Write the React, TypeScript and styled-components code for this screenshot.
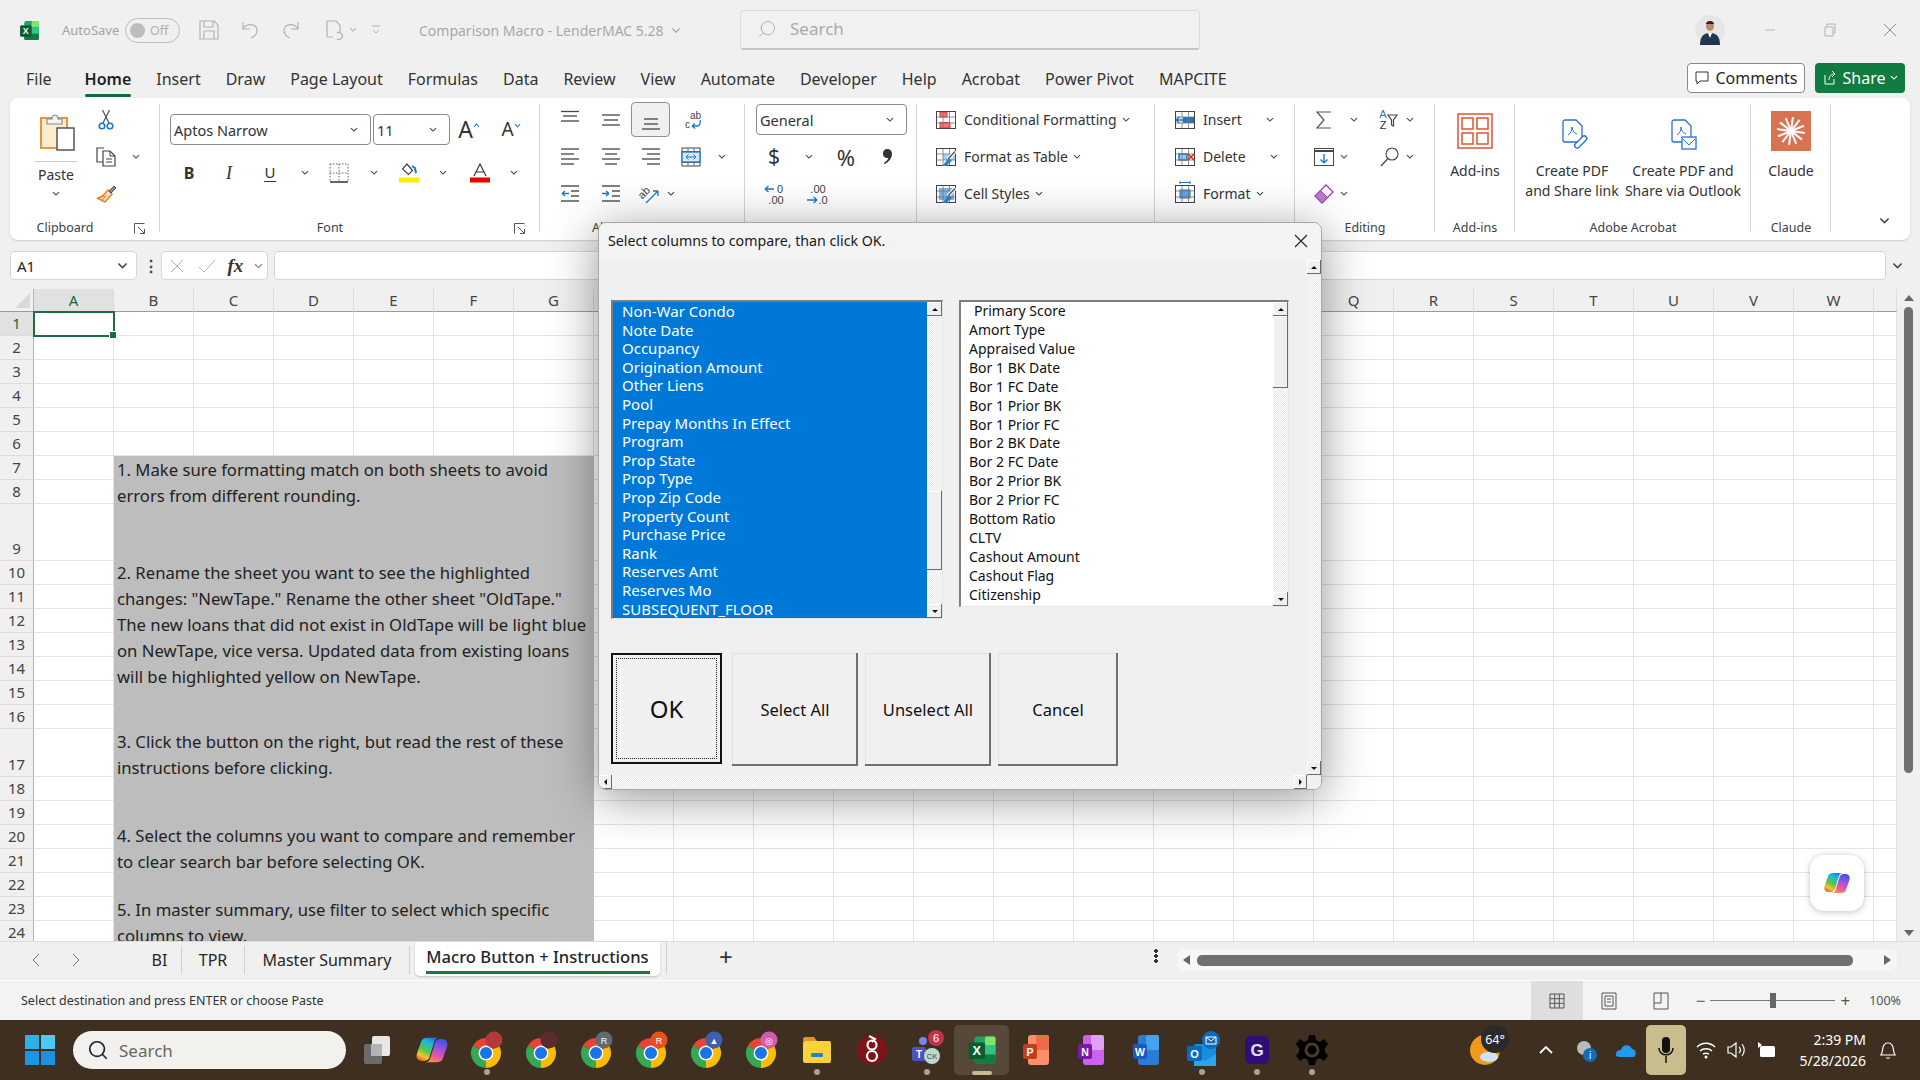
import { ReactNode } from 'react'
import styled, { createGlobalStyle } from 'styled-components'
import { Search as SearchIcon } from 'lucide-react'

const UI = `"Noto Sans", "Open Sans", sans-serif`

const Global = createGlobalStyle`
  html, body { margin: 0; padding: 0; background: #f0f0f0; }
  * { box-sizing: border-box; }
  body { font-family: ${UI}; color: #262626; }
`

const Screen = styled.div`
  position: relative;
  width: 1920px;
  height: 1080px;
  overflow: hidden;
  display: flex;
  flex-direction: column;
  background: #f0f0f0;
`

/* ---------- small drawing helpers ---------- */

const Svg = ({ w = 20, h = 20, vb, children }: { w?: number; h?: number; vb?: string; children: ReactNode }) => (
  <svg width={w} height={h} viewBox={vb ?? `0 0 ${w} ${h}`} fill="none" style={{ overflow: 'visible', flex: 'none' }}>
    {children}
  </svg>
)

const Chev = ({ color = '#444', w = 8 }: { color?: string; w?: number }) => (
  <svg width={w} height={w * 0.65} viewBox="0 0 8 5" fill="none" style={{ flex: 'none' }}>
    <path d="M1 1l3 3 3-3" stroke={color} strokeWidth="1.100" />
  </svg>
)

const Lines = ({ rows }: { rows: [number, number, number][] }) => (
  <Svg>
    {rows.map(([x1, x2, y]) => (
      <path key={y} d={`M${x1} ${y}H${x2}`} stroke="#444" strokeWidth="1.300" />
    ))}
  </Svg>
)

const GridIco = ({ children, over }: { children?: ReactNode; over?: ReactNode }) => (
  <Svg w={20} h={18}>
    <rect x=".5" y=".5" width="19" height="17" fill="#fff" />
    {children}
    <path d="M.5 6h19M.5 12h19M7 .5v17M13.500 .5v17" stroke="#777" strokeWidth=".8" />
    <rect x=".5" y=".5" width="19" height="17" stroke="#444" />
    {over}
  </Svg>
)

const Brush = () => (
  <>
    <path d="M19.500 3L12 11" stroke="#fff" strokeWidth="4" />
    <path d="M19 3.500L12 11" stroke="#555" strokeWidth="1.400" />
    <path d="M13 10l3 3-6 5H6c2-2 4-5 7-8z" fill="#2f7fd1" />
  </>
)

const Launch = () => (
  <Svg w={11} h={11}>
    <path d="M.5 10.500V.5h10" stroke="#555" />
    <path d="M4 4l6 6M10.500 6v4.500H6" stroke="#555" />
  </Svg>
)

/* ---------- title bar ---------- */

const TitleBar = styled.div`
  height: 60px;
  flex: none;
  display: flex;
  align-items: center;
  color: #a3a3a3;
`
const TitleLeft = styled.div`
  width: 740px;
  flex: none;
  display: flex;
  align-items: center;
  padding-left: 19px;
`
const AutoSave = styled.span`
  margin-left: 22px;
  font-size: 13px;
  width: 63px;
`
const Toggle = styled.span`
  width: 55px;
  height: 25px;
  border: 1.5px solid #bdbdbd;
  border-radius: 13px;
  display: flex;
  align-items: center;
  padding: 0 4px;
  gap: 5px;
  font-size: 12.5px;
  color: #b0b0b0;
  &::before {
    content: '';
    width: 15px;
    height: 15px;
    border-radius: 50%;
    background: #bdbdbd;
  }
`
const QatBtn = styled.span<{ $w?: number; $ml?: number }>`
  width: ${({ $w }) => $w ?? 41}px;
  margin-left: ${({ $ml }) => $ml ?? 0}px;
  display: flex;
  justify-content: center;
  align-items: center;
  gap: 4px;
`
const DocName = styled.span`
  margin-left: 31px;
  font-size: 14px;
  display: flex;
  align-items: center;
  gap: 7px;
  white-space: nowrap;
  color: #a8a8a8;
`
const SearchBox = styled.div`
  width: 460px;
  height: 40px;
  border: 1px solid #dcdcdc;
  border-bottom: 2px solid #c4c4c4;
  border-radius: 4px;
  background: #f1f1f1;
  display: flex;
  align-items: center;
  padding: 0 0 2px 16px;
  gap: 13px;
  font-size: 17px;
  color: #a9a9a9;
`
const TitleRight = styled.div`
  margin-left: auto;
  display: flex;
  align-items: center;
`
const WinBtn = styled.span<{ $first?: boolean }>`
  width: 60px;
  margin-left: ${({ $first }) => ($first ? 15 : 0)}px;
  display: flex;
  justify-content: center;
`

/* ---------- ribbon tabs ---------- */

const TabsRow = styled.div`
  height: 38px;
  flex: none;
  display: flex;
  align-items: flex-start;
  padding: 3px 15px 0 26px;
  gap: 25px;
  font-size: 16px;
`
const RibbonTab = styled.span<{ $active?: boolean; $wide?: boolean }>`
  position: relative;
  height: 34px;
  line-height: 33px;
  white-space: nowrap;
  margin-right: ${({ $wide }) => ($wide ? 8 : 0)}px;
  font-weight: ${({ $active }) => ($active ? 600 : 400)};
  color: ${({ $active }) => ($active ? '#1f1f1f' : '#333')};
  &::after {
    content: '';
    display: ${({ $active }) => ($active ? 'block' : 'none')};
    position: absolute;
    left: 0;
    right: 0;
    bottom: 0;
    height: 3px;
    background: #0f6b3c;
    border-radius: 2px;
  }
`
const TabActions = styled.div`
  margin-left: auto;
  display: flex;
  gap: 10px;
`
const CommentsBtn = styled.span`
  width: 118px;
  height: 30px;
  border: 1px solid #8a8a8a;
  border-radius: 4px;
  background: #fff;
  display: flex;
  align-items: center;
  justify-content: center;
  gap: 5px;
  font-size: 16px;
`
const ShareBtn = styled.span`
  width: 90px;
  height: 30px;
  border-radius: 4px;
  background: #107c41;
  color: #fff;
  display: flex;
  align-items: center;
  justify-content: center;
  gap: 5px;
  font-size: 16px;
`

/* ---------- ribbon ---------- */

const Ribbon = styled.div`
  height: 142px;
  flex: none;
  margin: 0 10px;
  background: #fff;
  border-radius: 8px;
  display: flex;
  box-shadow: 0 1px 2px rgba(0, 0, 0, 0.15);
  position: relative;
  font-size: 14px;
  color: #333;
`
const Group = styled.div<{ $w: number; $last?: boolean }>`
  position: relative;
  width: ${({ $w }) => $w}px;
  flex: none;
  height: 100%;
  display: flex;
  flex-direction: column;
  padding-top: 3px;
  &::after {
    content: '';
    display: ${({ $last }) => ($last ? 'none' : 'block')};
    position: absolute;
    right: 0;
    top: 6px;
    bottom: 8px;
    width: 1px;
    background: #d4d4d4;
  }
`
const GroupBody = styled.div<{ $pl?: number; $row?: boolean }>`
  flex: 1;
  min-height: 0;
  display: flex;
  flex-direction: ${({ $row }) => ($row ? 'row' : 'column')};
  padding-left: ${({ $pl }) => $pl ?? 0}px;
`
const GroupLabel = styled.div<{ $launch?: boolean }>`
  height: 26px;
  flex: none;
  position: relative;
  text-align: center;
  font-size: 12.5px;
  line-height: 20px;
  padding: 4px ${({ $launch }) => ($launch ? 40 : 0)}px 0 0;
  color: #404040;
  white-space: nowrap;
`
const Launcher = styled.span`
  position: absolute;
  right: 15px;
  top: 9px;
  display: flex;
`
const ToolRow = styled.div<{ $h?: number }>`
  height: ${({ $h }) => $h ?? 37}px;
  flex: none;
  display: flex;
  align-items: center;
`
const Tool = styled.span<{ $w?: number; $on?: boolean }>`
  width: ${({ $w }) => $w ?? 24}px;
  height: ${({ $on }) => ($on ? '35px' : 'auto')};
  flex: none;
  display: flex;
  align-items: center;
  justify-content: center;
  background: ${({ $on }) => ($on ? '#f0f0f0' : 'transparent')};
  border: ${({ $on }) => ($on ? '1px solid #8f8f8f' : 'none')};
  border-radius: 4px;
`
const Glyph = styled.span<{ $size?: number; $bold?: boolean; $serif?: boolean; $italic?: boolean }>`
  font-size: ${({ $size }) => $size ?? 15}px;
  font-weight: ${({ $bold }) => ($bold ? 700 : 400)};
  font-style: ${({ $italic }) => ($italic ? 'italic' : 'normal')};
  font-family: ${({ $serif }) => ($serif ? '"Liberation Serif", serif' : 'inherit')};
  line-height: 1;
  color: #333;
`
const Under = styled(Glyph)`
  border-bottom: 1.5px solid #333;
  padding: 0 1px 1px;
`
const Combo = styled.span<{ $w: number; $h?: number }>`
  width: ${({ $w }) => $w}px;
  height: ${({ $h }) => $h ?? 31}px;
  flex: none;
  border: 1px solid #8a8a8a;
  border-radius: 4px;
  background: #fff;
  display: flex;
  align-items: center;
  justify-content: space-between;
  padding: 0 12px 0 3px;
  font-size: 14.5px;
  margin-right: 2px;
`
const PasteCol = styled.div`
  width: 52px;
  margin-left: 20px;
  flex: none;
  display: flex;
  flex-direction: column;
  align-items: center;
  padding-top: 12px;
`
const PasteRule = styled.div`
  width: 42px;
  height: 1px;
  background: #c8c8c8;
  margin: 10px 0 4px;
`
const PasteLabel = styled.span`
  line-height: 18px;
  margin-bottom: 7px;
`
const ToolCol = styled.div`
  display: flex;
  flex-direction: column;
  margin-left: 12px;
`
const StyleRow = styled(ToolRow)`
  padding-left: 19px;
  gap: 8px;
  white-space: nowrap;
`
const CellRow = styled(ToolRow)`
  padding-left: 20px;
  gap: 8px;
  white-space: nowrap;
`
const RowChev = styled.span<{ $gap?: number }>`
  margin-left: ${({ $gap }) => $gap ?? -3}px;
  display: flex;
`
const BigTool = styled.div<{ $w?: number }>`
  width: ${({ $w }) => $w ?? 80}px;
  flex: none;
  display: flex;
  flex-direction: column;
  align-items: center;
  text-align: center;
  line-height: 20px;
  white-space: nowrap;
`
const BigIcon = styled.div<{ $dy?: number; $dx?: number }>`
  height: 60px;
  display: flex;
  align-items: center;
  justify-content: center;
  padding: ${({ $dy }) => $dy ?? 0}px 0 0 ${({ $dx }) => $dx ?? 0}px;
`
const Collapse = styled.span`
  position: absolute;
  right: 20px;
  bottom: 12px;
`

/* ---------- formula bar ---------- */

const FormulaBar = styled.div`
  height: 49px;
  flex: none;
  display: flex;
  align-items: center;
  padding: 2px 0 0 10px;
  gap: 6px;
`
const NameBox = styled.div`
  width: 127px;
  height: 29px;
  border: 1px solid #d6d6d6;
  border-radius: 4px;
  background: #fff;
  display: flex;
  align-items: center;
  justify-content: space-between;
  padding: 0 8px 0 6px;
  font-size: 15px;
`
const Kebab = styled.span`
  width: 16px;
  text-align: center;
  font-size: 16px;
  font-weight: 700;
  color: #444;
  line-height: 1;
`
const FxBox = styled(NameBox)`
  width: 107px;
  padding: 0 4px 0 6px;
  gap: 2px;
  margin-left: -4px;
`
const FormulaInput = styled.div`
  width: 1612px;
  height: 29px;
  border: 1px solid #d6d6d6;
  border-radius: 4px;
  background: #fff;
`
const FxExpand = styled.span`
  margin-left: 0;
  display: flex;
`

/* ---------- sheet ---------- */

const SheetArea = styled.div`
  height: 652px;
  flex: none;
  display: flex;
  overflow: hidden;
`
const Sheet = styled.div<{ $rows: string }>`
  width: 1897px;
  height: 652px;
  overflow: hidden;
  display: grid;
  grid-template-columns: 34px repeat(23, 80px) 23px;
  grid-template-rows: ${({ $rows }) => $rows};
  background: #fff;
`
const Corner = styled.div`
  background: #f0f0f0;
  border-bottom: 1px solid #9c9c9c;
  border-right: 1px solid #b5b5b5;
  position: relative;
  &::after {
    content: '';
    position: absolute;
    right: 3px;
    bottom: 3px;
    border-style: solid;
    border-width: 0 0 15px 15px;
    border-color: transparent transparent #d9d9d9 transparent;
  }
`
const ColHead = styled.div<{ $on?: boolean }>`
  background: ${({ $on }) => ($on ? '#e1e1e1' : '#f0f0f0')};
  border-right: 1px solid #dcdcdc;
  border-bottom: 1px solid #9c9c9c;
  display: flex;
  align-items: center;
  justify-content: center;
  font-size: 15px;
  color: ${({ $on }) => ($on ? '#0f6b3c' : '#444')};
`
const RowHead = styled.div<{ $on?: boolean }>`
  background: ${({ $on }) => ($on ? '#e1e1e1' : '#f0f0f0')};
  border-right: 1px solid #b5b5b5;
  border-bottom: 1px solid #dcdcdc;
  display: flex;
  align-items: flex-end;
  justify-content: center;
  font-size: 15px;
  line-height: 23px;
  color: ${({ $on }) => ($on ? '#0f6b3c' : '#444')};
`
const Cell = styled.div<{ $active?: boolean }>`
  position: relative;
  border-right: 1px solid #e3e3e3;
  border-bottom: 1px solid #e3e3e3;
  ${({ $active }) =>
    $active &&
    `outline: 2px solid #1d6f42;
     outline-offset: -1px;
     z-index: 1;
     &::after {
       content: '';
       position: absolute;
       right: -4px;
       bottom: -4px;
       width: 6px;
       height: 6px;
       background: #1d6f42;
       border: 1px solid #fff;
     }`}
`
const Merged = styled.div`
  grid-column: 3 / 9;
  grid-row: 8 / 26;
  background: #bdbdbd;
  padding: 1px 3px 0 3px;
  font-size: 16.7px;
  line-height: 26px;
  color: #222;
  overflow: hidden;
`
const Para = styled.p<{ $after: number }>`
  margin: 0 0 ${({ $after }) => $after}px;
`
const VBar = styled.div`
  width: 23px;
  flex: none;
  position: relative;
  background: #f0f0f0;
  display: flex;
  flex-direction: column;
  align-items: center;
  padding-top: 6px;
`
const ArrowUp = styled.span`
  width: 0;
  height: 0;
  border-left: 5px solid transparent;
  border-right: 5px solid transparent;
  border-bottom: 6px solid #666;
`
const ArrowDown = styled(ArrowUp)`
  display: block;
  transform: rotate(180deg);
`
const VThumb = styled.div`
  width: 9px;
  height: 466px;
  margin-top: 6px;
  border-radius: 5px;
  background: #707070;
`
const VDown = styled.span`
  margin-top: auto;
  margin-bottom: 5px;
`

/* ---------- sheet tabs and status ---------- */

const SheetTabs = styled.div`
  height: 40px;
  flex: none;
  display: flex;
  align-items: flex-start;
  background: #f0f0f0;
  border-top: 1px solid #dcdcdc;
  border-bottom: 1px solid #fff;
  font-size: 16px;
`
const NavArrows = styled.div`
  width: 138px;
  flex: none;
  height: 36px;
  display: flex;
  padding-left: 31px;
  gap: 30px;
  align-items: center;
`
const SheetTab = styled.span<{ $w: number }>`
  width: ${({ $w }) => $w}px;
  height: 28px;
  margin-top: 4px;
  flex: none;
  display: flex;
  align-items: center;
  justify-content: center;
  border-right: 1px solid #d0d0d0;
  white-space: nowrap;
`
const ActiveTab = styled.span`
  width: 245px;
  height: 34px;
  margin: 0 6px 0 5px;
  flex: none;
  background: #fff;
  border-radius: 0 0 5px 5px;
  box-shadow: 0 1px 2px rgba(0, 0, 0, 0.2);
  display: flex;
  flex-direction: column;
  align-items: center;
  font-size: 16.6px;
  font-weight: 500;
  line-height: 29px;
  white-space: nowrap;
  &::after {
    content: '';
    width: 224px;
    height: 2.5px;
    background: #107c41;
  }
`
const AddSheet = styled.span`
  font-size: 24px;
  line-height: 30px;
  color: #333;
  border-left: 1px solid #d0d0d0;
  padding-left: 52px;
  height: 32px;
`
const SheetKebab = styled.span`
  margin-left: auto;
  margin-top: 7px;
  width: 4px;
  height: 14px;
  background: radial-gradient(circle at 50% 2px, #333 1.6px, transparent 2px) 0 0 / 4px 5px repeat-y;
`
const HTrack = styled.div`
  width: 720px;
  height: 22px;
  margin: 7px 23px 0 19px;
  background: #f6f6f6;
  border-radius: 8px;
  display: flex;
  align-items: center;
  padding: 0 6px;
`
const HArrow = styled.span<{ $right?: boolean }>`
  width: 0;
  height: 0;
  border-top: 5px solid transparent;
  border-bottom: 5px solid transparent;
  ${({ $right }) => ($right ? 'border-left: 7px solid #666;' : 'border-right: 7px solid #666;')}
`
const HThumb = styled.span`
  width: 656px;
  height: 11px;
  margin: 0 auto 0 7px;
  border-radius: 5px;
  background: #707070;
`
const StatusBar = styled.div`
  height: 39px;
  flex: none;
  display: flex;
  align-items: center;
  background: #f3f3f3;
  padding-left: 21px;
  font-size: 12.5px;
  color: #333;
`
const StatusRight = styled.div`
  margin-left: auto;
  height: 100%;
  display: flex;
  align-items: center;
`
const ViewBtn = styled.span<{ $on?: boolean }>`
  width: 52px;
  height: 100%;
  display: flex;
  align-items: center;
  justify-content: center;
  background: ${({ $on }) => ($on ? '#dedede' : 'transparent')};
`
const Zoom = styled.span`
  margin-left: 9px;
  display: flex;
  align-items: center;
  gap: 5px;
  color: #555;
  font-size: 17px;
`
const ZoomTrack = styled.span`
  position: relative;
  width: 125px;
  height: 1px;
  background: #777;
  &::after {
    content: '';
    position: absolute;
    left: 60px;
    top: -7px;
    width: 6px;
    height: 15px;
    background: #666;
  }
`
const ZoomPct = styled.span`
  margin: 0 19px 0 19px;
  font-size: 12.5px;
  color: #555;
`

/* ---------- taskbar ---------- */

const Taskbar = styled.div`
  height: 60px;
  flex: none;
  display: flex;
  align-items: center;
  background: #3e2f20;
  padding-left: 25px;
`
const TaskSearch = styled.div`
  width: 273px;
  height: 38px;
  margin: 0 3px 0 18px;
  border-radius: 19px;
  background: #f3f1ee;
  display: flex;
  align-items: center;
  padding-left: 14px;
  gap: 10px;
  font-size: 17px;
  color: #666;
`
const TaskItem = styled.span<{ $dot?: boolean; $active?: boolean }>`
  position: relative;
  width: 55px;
  height: 50px;
  flex: none;
  display: flex;
  align-items: center;
  justify-content: center;
  border-radius: 5px;
  background: ${({ $active }) => ($active ? '#57493a' : 'transparent')};
  &::after {
    content: '';
    display: ${({ $dot, $active }) => ($dot || $active ? 'block' : 'none')};
    position: absolute;
    left: 50%;
    bottom: 0;
    transform: translateX(-50%);
    width: ${({ $active }) => ($active ? '20px' : '6px')};
    height: ${({ $active }) => ($active ? '4px' : '6px')};
    border-radius: 3px;
    background: ${({ $active }) => ($active ? '#c8bd8c' : '#a8a29a')};
  }
`
const Tray = styled.div`
  margin-left: auto;
  height: 100%;
  display: flex;
  flex: none;
  align-items: center;
  color: #fff;
  padding-right: 15px;
`
const TrayItem = styled.span<{ $w: number }>`
  width: ${({ $w }) => $w}px;
  flex: none;
  display: flex;
  align-items: center;
  justify-content: center;
`
const Weather = styled.span`
  position: relative;
  width: 54px;
  display: flex;
  justify-content: center;
  margin-right: 14px;
`
const TempBadge = styled.span`
  position: absolute;
  left: 23px;
  top: -8px;
  width: 28px;
  height: 28px;
  border-radius: 50%;
  background: #2a2a2a;
  color: #fff;
  display: flex;
  align-items: center;
  justify-content: center;
  font-size: 12.5px;
`
const MicBox = styled.span`
  width: 40px;
  height: 50px;
  flex: none;
  border-radius: 5px;
  background: #c8bd8c;
  display: flex;
  align-items: center;
  justify-content: center;
`
const Clock = styled.div`
  width: 80px;
  flex: none;
  margin-right: 5px;
  text-align: right;
  font-size: 14px;
  line-height: 21px;
  color: #fff;
`

/* ---------- VBA dialog ---------- */

const Dialog = styled.div`
  position: absolute;
  left: 598px;
  top: 222px;
  width: 724px;
  height: 568px;
  background: #f0f0f0;
  border: 1px solid #a8a8a8;
  border-radius: 8px;
  overflow: hidden;
  box-shadow: 0 8px 48px rgba(0, 0, 0, 0.42);
  display: flex;
  flex-direction: column;
  z-index: 5;
`
const DialogTitle = styled.div`
  height: 37px;
  flex: none;
  background: #f3f3f3;
  display: flex;
  align-items: center;
  justify-content: space-between;
  padding: 0 13px 2px 9px;
  font-size: 14.2px;
  color: #1a1a1a;
`
const DialogMid = styled.div`
  flex: 1;
  min-height: 0;
  display: flex;
`
const DialogBody = styled.div`
  flex: 1;
  padding: 40px 0 0 12px;
`
const Lists = styled.div`
  display: flex;
  align-items: flex-start;
  gap: 16px;
`
const ListBox = styled.div<{ $h: number; $w: number; $sel?: boolean }>`
  width: ${({ $w }) => $w}px;
  height: ${({ $h }) => $h}px;
  flex: none;
  display: flex;
  background: ${({ $sel }) => ($sel ? '#0078d7' : '#fff')};
  color: ${({ $sel }) => ($sel ? '#fff' : '#111')};
  border-top: 2px solid #7d7d7d;
  border-left: 2px solid #7d7d7d;
  border-right: 1px solid #e6e6e6;
  border-bottom: 1px solid #e6e6e6;
  overflow: hidden;
`
const ListItems = styled.div<{ $pl: number }>`
  flex: 1;
  min-width: 0;
  padding: 0 0 0 ${({ $pl }) => $pl}px;
`
const ListItem = styled.div<{ $indent?: boolean; $pitch: number; $size: number }>`
  height: ${({ $pitch }) => $pitch}px;
  line-height: ${({ $pitch }) => $pitch}px;
  font-size: ${({ $size }) => $size}px;
  white-space: nowrap;
  padding-left: ${({ $indent }) => ($indent ? 5 : 0)}px;
`
const ClassicBar = styled.div<{ $w?: number }>`
  width: ${({ $w }) => $w ?? 15}px;
  flex: none;
  display: flex;
  flex-direction: column;
  background: repeating-conic-gradient(#fbfbfb 0 25%, #e9e9e9 0 50%) 0 0 / 2px 2px;
`
const ClassicBtn = styled.span`
  width: 100%;
  height: 14px;
  flex: none;
  background: #f0f0f0;
  box-shadow: inset -1px -1px 0 #6a6a6a, inset 1px 1px 0 #fff;
  display: flex;
  align-items: center;
  justify-content: center;
`
const ClassicThumb = styled.span<{ $top: number; $h: number }>`
  height: ${({ $h }) => $h}px;
  margin-top: ${({ $top }) => $top}px;
  flex: none;
  background: #f0f0f0;
  box-shadow: inset -1px -1px 0 #6a6a6a, inset 1px 1px 0 #fff;
`
const Spacer = styled.span`
  flex: 1;
`
const Tri = styled.span<{ $dir: 'up' | 'down' | 'left' | 'right' }>`
  width: 0;
  height: 0;
  ${({ $dir }) =>
    $dir === 'up'
      ? 'border-left: 3px solid transparent; border-right: 3px solid transparent; border-bottom: 3px solid #111;'
      : $dir === 'down'
        ? 'border-left: 3px solid transparent; border-right: 3px solid transparent; border-top: 3px solid #111;'
        : $dir === 'left'
          ? 'border-top: 3px solid transparent; border-bottom: 3px solid transparent; border-right: 3px solid #111;'
          : 'border-top: 3px solid transparent; border-bottom: 3px solid transparent; border-left: 3px solid #111;'}
`
const Buttons = styled.div`
  margin-top: 34px;
  display: flex;
  align-items: flex-start;
  gap: 7px;
`
const Btn = styled.button<{ $w: number }>`
  width: ${({ $w }) => $w}px;
  height: 113px;
  background: #f0f0f0;
  border: none;
  padding: 0;
  box-shadow: inset -2px -2px 0 #6f6f6f, inset 1px 1px 0 #e2e2e2;
  font-family: ${UI};
  font-size: 16.5px;
  color: #111;
`
const OkBtn = styled(Btn)`
  position: relative;
  height: 111px;
  margin-right: 3px;
  border: 2px solid #111;
  box-shadow: none;
  font-size: 24px;
  &::after {
    content: '';
    position: absolute;
    inset: 3px;
    border: 1px dotted #222;
  }
`
const HBarRow = styled.div`
  height: 14px;
  flex: none;
  display: flex;
`
const HBarTrack = styled.div`
  flex: 1;
  display: flex;
  background: repeating-conic-gradient(#fbfbfb 0 25%, #e9e9e9 0 50%) 0 0 / 2px 2px;
`
const HBarBtn = styled(ClassicBtn)`
  width: 13px;
`
const BarCorner = styled.span`
  width: 14px;
  background: #f0f0f0;
`

/* ---------- copilot floating button ---------- */

const CopilotFloat = styled.div`
  position: absolute;
  left: 1810px;
  top: 855px;
  width: 54px;
  height: 56px;
  border-radius: 14px;
  background: #fff;
  box-shadow: 0 1px 6px rgba(0, 0, 0, 0.25);
  display: flex;
  align-items: center;
  justify-content: center;
`

/* ---------- icons ---------- */

const CopilotIcon = ({ size = 28 }: { size?: number }) => (
  <svg width={size} height={size} viewBox="0 0 28 28" fill="none">
    <defs>
      <linearGradient id="cpL" x1="18" y1="3" x2="7" y2="25" gradientUnits="userSpaceOnUse">
        <stop stopColor="#1f5fe0" />
        <stop offset=".3" stopColor="#1fb6d8" />
        <stop offset=".58" stopColor="#4fc94e" />
        <stop offset=".8" stopColor="#f6c32b" />
        <stop offset="1" stopColor="#e8412f" />
      </linearGradient>
      <linearGradient id="cpR" x1="20" y1="4" x2="12" y2="25" gradientUnits="userSpaceOnUse">
        <stop stopColor="#2f56e6" />
        <stop offset=".35" stopColor="#9a4fe2" />
        <stop offset=".7" stopColor="#ee5a9a" />
        <stop offset="1" stopColor="#f9a23a" />
      </linearGradient>
    </defs>
    <path d="M10 4h10c-2.200 0-3.400.9-4.100 3.200l-3.700 12c-.8 2.800-2.200 3.800-4.400 3.800H5.500C2.300 23 .6 20.300 1.500 17.300L5 7.200C5.700 5.100 7.500 4 10 4z" fill="url(#cpL)" />
    <path d="M18 24H8.500c2.200 0 3.400-.9 4.100-3.200l3.700-12C17.100 6 18.500 5 20.700 5h1.800c3.200 0 4.900 2.700 4 5.700L23 20.800C22.300 22.900 20.500 24 18 24z" fill="url(#cpR)" />
  </svg>
)

const ExcelLogo = ({ size = 20 }: { size?: number }) => (
  <svg width={size} height={size} viewBox="0 0 20 20">
    <rect x="5" y="1" width="14" height="18" rx="2" fill="#21a366" />
    <rect x="12" y="1" width="7" height="6" rx="1" fill="#7fe36c" />
    <rect x="12" y="7" width="7" height="6" fill="#33c481" />
    <rect x="5" y="13" width="14" height="6" rx="1" fill="#107c41" />
    <rect x="1" y="5" width="11" height="11" rx="1.500" fill="#0b5c2f" />
    <text x="6.500" y="13.600" fontSize="8.500" fontWeight="700" fill="#fff" textAnchor="middle" fontFamily="Liberation Sans">X</text>
  </svg>
)

const Chrome = ({ badge, mark }: { badge: string; mark?: string }) => (
  <svg width="34" height="38" viewBox="0 0 34 38">
    <g transform="translate(0 6)">
      <path d="M16 16L3 8.500A15 15 0 0 1 29 8.500Z" fill="#ea4335" />
      <path d="M16 16L29 8.500A15 15 0 0 1 16 31Z" fill="#fbbc04" />
      <path d="M16 16L16 31A15 15 0 0 1 3 8.500Z" fill="#34a853" />
      <circle cx="16" cy="16" r="7.500" fill="#fff" />
      <circle cx="16" cy="16" r="6" fill="#1a73e8" />
    </g>
    <circle cx="24" cy="9" r="8.500" fill={badge} />
    {mark && <text x="24" y="12.500" fontSize="9" fill="#fff" textAnchor="middle" fontFamily="Liberation Sans">{mark}</text>}
  </svg>
)

const Tile = ({ from, to, letter, chip }: { from: string; to: string; letter: string; chip: string }) => (
  <svg width="32" height="32" viewBox="0 0 32 32">
    <rect x="7" y="1" width="21" height="30" rx="3" fill={from} />
    <rect x="15" y="1" width="13" height="15" rx="2" fill={to} />
    <rect x="2" y="10" width="14" height="15" rx="2" fill={chip} />
    <text x="9" y="21.500" fontSize="10.500" fontWeight="700" fill="#fff" textAnchor="middle" fontFamily="Liberation Sans">{letter}</text>
  </svg>
)

const rows: number[] = [24, 24, 24, 24, 24, 24, 24, 24, 57, 24, 24, 24, 24, 24, 24, 24, 48, 24, 24, 24, 24, 24, 24, 24]
const cols = 'ABCDEFGHIJKLMNOPQRSTUVWX'.split('')

const leftItems = [
  'Non-War Condo', 'Note Date', 'Occupancy', 'Origination Amount', 'Other Liens', 'Pool',
  'Prepay Months In Effect', 'Program', 'Prop State', 'Prop Type', 'Prop Zip Code',
  'Property Count', 'Purchase Price', 'Rank', 'Reserves Amt', 'Reserves Mo', 'SUBSEQUENT_FLOOR',
]
const rightItems = [
  'Amort Type', 'Appraised Value', 'Bor 1 BK Date', 'Bor 1 FC Date', 'Bor 1 Prior BK', 'Bor 1 Prior FC',
  'Bor 2 BK Date', 'Bor 2 FC Date', 'Bor 2 Prior BK', 'Bor 2 Prior FC', 'Bottom Ratio', 'CLTV',
  'Cashout Amount', 'Cashout Flag', 'Citizenship',
]

const tabs = ['Insert', 'Draw', 'Page Layout', 'Formulas', 'Data', 'Review', 'View', 'Automate', 'Developer', 'Help', 'Acrobat', 'Power Pivot', 'MAPCITE']

const ListScroll = ({ top, h }: { top: number; h: number }) => (
  <ClassicBar>
    <ClassicBtn><Tri $dir="up" /></ClassicBtn>
    <ClassicThumb $top={top} $h={h} />
    <Spacer />
    <ClassicBtn><Tri $dir="down" /></ClassicBtn>
  </ClassicBar>
)

const Clipboard = () => (
  <Group $w={150}>
    <GroupBody $row>
      <PasteCol>
        <Svg w={38} h={38}>
          <rect x="4" y="5" width="26" height="30" fill="#fdeccd" stroke="#e8953a" strokeWidth="2" />
          <path d="M10 11V6h5c0-5 6-5 6 0h4v5z" fill="#f4f4f4" stroke="#8a8a8a" strokeWidth="1.200" />
          <rect x="20" y="15" width="17" height="22" fill="#fff" stroke="#555" strokeWidth="1.500" />
        </Svg>
        <PasteRule />
        <PasteLabel>Paste</PasteLabel>
        <Chev />
      </PasteCol>
      <ToolCol>
        <ToolRow>
          <Tool>
            <Svg h={22}>
              <path d="M6.500 1l6.500 13M13.500 1L7 14" stroke="#444" strokeWidth="1.100" />
              <circle cx="6" cy="17" r="2.800" stroke="#1e78c8" strokeWidth="1.600" />
              <circle cx="14" cy="17" r="2.800" stroke="#1e78c8" strokeWidth="1.600" />
            </Svg>
          </Tool>
        </ToolRow>
        <ToolRow>
          <Tool>
            <Svg>
              <path d="M8 15H1V1h7" stroke="#444" strokeWidth="1.200" />
              <path d="M7 4h7l5 5v10H7z" fill="#fff" stroke="#444" strokeWidth="1.200" />
              <path d="M14 4v5h5M10 12h6M10 15h6" stroke="#444" strokeWidth="1" />
            </Svg>
          </Tool>
          <RowChev $gap={14}><Chev /></RowChev>
        </ToolRow>
        <ToolRow>
          <Tool>
            <Svg h={20}>
              <path d="M12 6l4 4-7 8-8-4c4 0 7-3 11-8z" fill="#fbe3c2" stroke="#e8861f" strokeWidth="1.500" />
              <path d="M3 14l6-2M6 16l5-5" stroke="#e8861f" />
              <path d="M13 7l5-5 2 2-5 5z" fill="#888" stroke="#555" />
            </Svg>
          </Tool>
        </ToolRow>
      </ToolCol>
    </GroupBody>
    <GroupLabel $launch>Clipboard<Launcher><Launch /></Launcher></GroupLabel>
  </Group>
)

const FontGroup = () => (
  <Group $w={380}>
    <GroupBody $pl={10}>
      <ToolRow $h={57}>
        <Combo $w={201}>Aptos Narrow<Chev /></Combo>
        <Combo $w={77}>11<Chev /></Combo>
        <Tool $w={34}>
          <Glyph $size={23}>A</Glyph>
          <Svg w={7} h={14}><path d="M1 4l2.500-3L6 4" stroke="#1e78c8" strokeWidth="1.100" /></Svg>
        </Tool>
        <Tool $w={50}>
          <Glyph $size={19}>A</Glyph>
          <Svg w={7} h={14}><path d="M1 1l2.500 3L6 1" stroke="#1e78c8" strokeWidth="1.100" /></Svg>
        </Tool>
      </ToolRow>
      <ToolRow $h={30}>
        <Tool $w={38}><Glyph $bold $size={16}>B</Glyph></Tool>
        <Tool $w={42}><Glyph $italic $serif $size={18}>I</Glyph></Tool>
        <Tool $w={40}><Under>U</Under></Tool>
        <RowChev $gap={11}><Chev /></RowChev>
        <Tool $w={60}>
          <Svg>
            <path d="M1 1h18v18M1 1v18M1 10h18M10 1v18" stroke="#666" strokeDasharray="1.500 1.500" />
            <path d="M1 19h18" stroke="#333" strokeWidth="1.500" />
          </Svg>
        </Tool>
        <RowChev $gap={1}><Chev /></RowChev>
        <Tool $w={62}>
          <Svg h={20}>
            <path d="M8 1l5.500 6.500-4 4L3.500 6z" fill="#fff" stroke="#444" strokeWidth="1.200" />
            <path d="M13 3l3 2 1 5" stroke="#1e78c8" strokeWidth="2" />
            <rect x="0" y="14.500" width="20" height="5" fill="#ffeb00" />
          </Svg>
        </Tool>
        <RowChev $gap={-1}><Chev /></RowChev>
        <Tool $w={66}>
          <Svg h={20}>
            <path d="M4 13L10 1l6 12M6 9h8" stroke="#333" strokeWidth="1.200" />
            <rect x="0" y="14.500" width="20" height="5" fill="#f00000" />
          </Svg>
        </Tool>
        <RowChev $gap={-3}><Chev /></RowChev>
      </ToolRow>
    </GroupBody>
    <GroupLabel $launch>Font<Launcher><Launch /></Launcher></GroupLabel>
  </Group>
)

const Alignment = () => (
  <Group $w={205}>
    <GroupBody $pl={9}>
      <ToolRow>
        <Tool $w={41}><Lines rows={[[1, 19, 1.500], [3, 17, 6], [1, 19, 11]]} /></Tool>
        <Tool $w={41}><Lines rows={[[1, 19, 5], [3, 17, 10], [1, 19, 15]]} /></Tool>
        <Tool $w={39} $on><Lines rows={[[3, 17, 9], [3, 17, 14], [1, 19, 19]]} /></Tool>
        <Tool $w={42}>
          <Svg>
            <text x="9" y="8.500" fontSize="10" fill="#444" fontFamily="Liberation Sans">ab</text>
            <text x="4" y="18" fontSize="10" fill="#444" fontFamily="Liberation Sans">c</text>
            <path d="M19 10c1 3-.5 6-3 6h-5M11 16l3-2.500M11 16l3 2.500" stroke="#1e78c8" strokeWidth="1.300" />
          </Svg>
        </Tool>
      </ToolRow>
      <ToolRow>
        <Tool $w={41}><Lines rows={[[1, 19, 2], [1, 14, 7], [1, 19, 12], [1, 14, 17]]} /></Tool>
        <Tool $w={41}><Lines rows={[[1, 19, 2], [4, 16, 7], [1, 19, 12], [4, 16, 17]]} /></Tool>
        <Tool $w={39}><Lines rows={[[1, 19, 2], [6, 19, 7], [1, 19, 12], [6, 19, 17]]} /></Tool>
        <Tool $w={42}>
          <Svg>
            <rect x="1" y="1" width="18" height="18" fill="#fff" stroke="#444" />
            <path d="M1 4.500h18M1 15.500h18M7 1v3.500M13 1v3.500M7 15.500V19M13 15.500V19" stroke="#666" />
            <rect x="1" y="5" width="18" height="10" fill="#d6e9f9" stroke="#1e78c8" strokeWidth="1.300" />
            <path d="M5 10h10M5 10l2.500-2.500M5 10l2.500 2.500M15 10l-2.500-2.500M15 10l-2.500 2.500" stroke="#1e78c8" />
          </Svg>
        </Tool>
        <RowChev $gap={6}><Chev /></RowChev>
      </ToolRow>
      <ToolRow>
        <Tool $w={41}>
          <Svg>
            <path d="M1 2h18M11 7h8M11 12h8M1 17h18" stroke="#555" strokeWidth="1.300" />
            <path d="M9 9.500H2M2 9.500l3-2.500M2 9.500l3 2.500" stroke="#1e78c8" strokeWidth="1.300" />
          </Svg>
        </Tool>
        <Tool $w={41}>
          <Svg>
            <path d="M1 2h18M11 7h8M11 12h8M1 17h18" stroke="#555" strokeWidth="1.300" />
            <path d="M1 9.500h7M8 9.500L5 7M8 9.500L5 12" stroke="#1e78c8" strokeWidth="1.300" />
          </Svg>
        </Tool>
        <Tool $w={35}>
          <Svg>
            <text x="0" y="12" fontSize="11" fill="#444" fontFamily="Liberation Sans" transform="rotate(-45 6 10)">ab</text>
            <path d="M7 19L19 7M19 7h-5M19 7v5" stroke="#1e78c8" strokeWidth="1.300" />
          </Svg>
        </Tool>
        <RowChev $gap={1}><Chev /></RowChev>
      </ToolRow>
    </GroupBody>
    <GroupLabel $launch>Alignment</GroupLabel>
  </Group>
)

const NumberGroup = () => (
  <Group $w={172}>
    <GroupBody $pl={11}>
      <ToolRow>
        <Combo $w={151}>General<Chev /></Combo>
      </ToolRow>
      <ToolRow>
        <Tool $w={36}><Glyph $size={21}>$</Glyph></Tool>
        <RowChev $gap={13}><Chev /></RowChev>
        <Tool $w={66}><Glyph $size={22}>%</Glyph></Tool>
        <Tool $w={16}>
          <Svg w={12} h={18}>
            <path d="M6 1a4.500 4.500 0 0 1 5 4.500c0 4.500-3 8.500-7.500 10.500l-.7-1.100C5.200 13.500 6.800 12 7.200 10 5.500 10.500 2 9.500 2 5.500 2 3 3.800 1 6 1z" fill="#333" />
          </Svg>
        </Tool>
      </ToolRow>
      <ToolRow>
        <Tool $w={36}>
          <Svg w={24} h={24}>
            <path d="M12 7H3M3 7l3.500-3M3 7l3.500 3" stroke="#1e78c8" strokeWidth="1.300" />
            <text x="18" y="11" fontSize="11" fill="#444" textAnchor="middle" fontFamily="Liberation Sans">0</text>
            <text x="14" y="22" fontSize="11" fill="#444" textAnchor="middle" fontFamily="Liberation Sans">.00</text>
          </Svg>
        </Tool>
        <Tool $w={47}>
          <Svg w={24} h={24}>
            <text x="14" y="11" fontSize="11" fill="#444" textAnchor="middle" fontFamily="Liberation Sans">.00</text>
            <path d="M3 18h10M13 18l-3.500-3M13 18l-3.500 3" stroke="#1e78c8" strokeWidth="1.300" />
            <text x="19" y="22" fontSize="11" fill="#444" textAnchor="middle" fontFamily="Liberation Sans">.0</text>
          </Svg>
        </Tool>
      </ToolRow>
    </GroupBody>
    <GroupLabel />
  </Group>
)

const Styles = () => (
  <Group $w={238}>
    <GroupBody>
      <StyleRow>
        <GridIco>
          <rect x="4" y="1" width="7" height="5" fill="#f27474" stroke="#d63a3a" />
          <rect x="4" y="11.500" width="10" height="5.500" fill="#f27474" stroke="#d63a3a" />
        </GridIco>
        Conditional Formatting <RowChev><Chev /></RowChev>
      </StyleRow>
      <StyleRow>
        <GridIco over={<Brush />}>
          <rect x="7" y="6" width="13" height="6" fill="#a9cff2" />
        </GridIco>
        Format as Table <RowChev><Chev /></RowChev>
      </StyleRow>
      <StyleRow>
        <GridIco over={<Brush />}>
          <rect x="3" y="3" width="15" height="12" fill="#7db7ea" />
        </GridIco>
        Cell Styles <RowChev><Chev /></RowChev>
      </StyleRow>
    </GroupBody>
    <GroupLabel />
  </Group>
)

const Cells = () => (
  <Group $w={140}>
    <GroupBody>
      <CellRow>
        <GridIco over={<path d="M9 9H1M1 9l3.500-3M1 9l3.500 3" stroke="#1e78c8" strokeWidth="1.400" />}>
          <rect x="8" y="6" width="12" height="6" fill="#1e78c8" />
        </GridIco>
        Insert <RowChev $gap={16}><Chev /></RowChev>
      </CellRow>
      <CellRow>
        <GridIco over={<path d="M13 6l6 6M19 6l-6 6" stroke="#e02020" strokeWidth="1.500" />}>
          <rect x="4" y="6" width="8" height="6" fill="#9cc8ef" stroke="#1e78c8" strokeWidth="1.500" />
        </GridIco>
        Delete <RowChev $gap={16}><Chev /></RowChev>
      </CellRow>
      <CellRow>
        <GridIco over={<path d="M5 -2.500h10M5 -4v3M15 -4v3" stroke="#1e78c8" />}>
          <rect x="5" y="5" width="10" height="8" fill="#5ea6e3" stroke="#1e78c8" />
        </GridIco>
        Format <RowChev><Chev /></RowChev>
      </CellRow>
    </GroupBody>
    <GroupLabel />
  </Group>
)

const Editing = () => (
  <Group $w={140}>
    <GroupBody $pl={17}>
      <ToolRow>
        <Tool>
          <Svg><path d="M17 2H3l7 8-7 8h14" stroke="#555" strokeWidth="1.200" /></Svg>
        </Tool>
        <RowChev $gap={14}><Chev /></RowChev>
        <Tool $w={60}>
          <Svg h={22}>
            <text x="5" y="9" fontSize="11" fill="#1e78c8" textAnchor="middle" fontFamily="Liberation Sans">A</text>
            <text x="5" y="20" fontSize="11" fill="#333" textAnchor="middle" fontFamily="Liberation Sans">Z</text>
            <path d="M10 6h9l-3.500 5v6l-2-1v-5z" stroke="#444" strokeWidth="1.200" />
          </Svg>
        </Tool>
        <RowChev $gap={-12}><Chev /></RowChev>
      </ToolRow>
      <ToolRow>
        <Tool>
          <Svg h={18}>
            <rect x=".5" y=".5" width="19" height="17" fill="#fff" stroke="#444" />
            <path d="M.5 3h19" stroke="#444" strokeWidth="2" />
            <path d="M10 6v9M10 15l-3.500-3.500M10 15l3.500-3.500" stroke="#1e78c8" strokeWidth="1.400" />
          </Svg>
        </Tool>
        <RowChev $gap={4}><Chev /></RowChev>
        <Tool $w={84}>
          <Svg>
            <circle cx="12" cy="7" r="6" stroke="#444" strokeWidth="1.100" />
            <path d="M8 11.500L1 19" stroke="#444" strokeWidth="1.200" />
          </Svg>
        </Tool>
        <RowChev $gap={-26}><Chev /></RowChev>
      </ToolRow>
      <ToolRow>
        <Tool>
          <Svg>
            <path d="M12 1l7 7-11 11-7-7z" fill="#fff" stroke="#9b3db8" strokeWidth="1.300" />
            <path d="M6.500 6.500l7 7L8 19l-7-7z" fill="#b77acd" stroke="#9b3db8" />
          </Svg>
        </Tool>
        <RowChev $gap={4}><Chev /></RowChev>
      </ToolRow>
    </GroupBody>
    <GroupLabel>Editing</GroupLabel>
  </Group>
)

const AddIns = () => (
  <Group $w={80}>
    <GroupBody $row>
      <BigTool>
        <BigIcon>
          <Svg w={36} h={36}>
            <rect x="1" y="1" width="34" height="34" stroke="#e0603a" strokeWidth="1.600" />
            <rect x="5" y="5" width="11" height="11" stroke="#e0603a" strokeWidth="1.600" />
            <rect x="20" y="5" width="11" height="11" stroke="#e0603a" strokeWidth="1.600" />
            <rect x="5" y="20" width="11" height="11" stroke="#e0603a" strokeWidth="1.600" />
            <rect x="20" y="20" width="11" height="11" stroke="#e0603a" strokeWidth="1.600" />
          </Svg>
        </BigIcon>
        Add-ins
      </BigTool>
    </GroupBody>
    <GroupLabel>Add-ins</GroupLabel>
  </Group>
)

const Adobe = () => (
  <Group $w={236}>
    <GroupBody $row>
      <BigTool $w={114}>
        <BigIcon $dy={5} $dx={5}>
          <Svg w={30} h={32}>
            <path d="M5 2h11l6 6v14c0 1-1 2-2 2H5c-1 0-2-1-2-2V4c0-1 1-2 2-2z" stroke="#2a6fd6" strokeWidth="1.300" />
            <path d="M8 17c3-2 4-5 4-8 0 3 2 6 5 7" stroke="#2a6fd6" />
            <rect x="13" y="22" width="15" height="5" rx="2.500" fill="#fff" stroke="#2a6fd6" strokeWidth="1.300" transform="rotate(-45 20 24)" />
          </Svg>
        </BigIcon>
        Create PDF<br />and Share link
      </BigTool>
      <BigTool $w={108}>
        <BigIcon $dy={5} $dx={2}>
          <Svg w={30} h={32}>
            <path d="M5 2h11l6 6v14c0 1-1 2-2 2H5c-1 0-2-1-2-2V4c0-1 1-2 2-2z" stroke="#2a6fd6" strokeWidth="1.300" />
            <path d="M8 17c3-2 4-5 4-8 0 3 2 6 5 7" stroke="#2a6fd6" />
            <rect x="13" y="19" width="14" height="12" fill="#fff" stroke="#2a6fd6" strokeWidth="1.300" />
            <path d="M14 21l6 6 6-6" stroke="#2a6fd6" />
          </Svg>
        </BigIcon>
        Create PDF and<br />Share via Outlook
      </BigTool>
    </GroupBody>
    <GroupLabel>Adobe Acrobat</GroupLabel>
  </Group>
)

const Claude = () => (
  <Group $w={80}>
    <GroupBody $row>
      <BigTool>
        <BigIcon>
          <Svg w={40} h={40}>
            <rect width="40" height="40" fill="#d97250" />
            {[0, 30, 60, 90, 120, 150, 180, 210, 240, 270, 300, 330].map((a) => (
              <path key={a} d="M20 20V6" stroke="#fff" strokeWidth="2" transform={`rotate(${a + 8} 20 20)`} />
            ))}
          </Svg>
        </BigIcon>
        Claude
      </BigTool>
    </GroupBody>
    <GroupLabel>Claude</GroupLabel>
  </Group>
)

export default function App() {
  const template = `23px ${rows.map((h) => `${h}px`).join(' ')}`
  return (
    <Screen>
      <Global />
      <TitleBar>
        <TitleLeft>
          <ExcelLogo size={21} />
          <AutoSave>AutoSave</AutoSave>
          <Toggle>Off</Toggle>
          <QatBtn $ml={8}>
            <Svg w={22} h={22}><path d="M2 2h14l4 4v14H2zM6 2v6h9V2M6 20v-8h10v8" stroke="#b3b3b3" strokeWidth="1.200" /></Svg>
          </QatBtn>
          <QatBtn>
            <Svg w={22} h={22}><path d="M4 3v7h7M4 10c3-6 13-6 14 1 .4 4-3 7-6 8" stroke="#b3b3b3" strokeWidth="1.200" /></Svg>
          </QatBtn>
          <QatBtn>
            <Svg w={22} h={22}><path d="M18 3v7h-7M18 10c-3-6-13-6-14 1-.4 4 3 7 6 8" stroke="#b3b3b3" strokeWidth="1.200" /></Svg>
          </QatBtn>
          <QatBtn $w={48} $ml={5}>
            <Svg w={22} h={22}><path d="M4 2h9l4 4v8M4 2v16h6M14 14a3.500 3.500 0 1 1 0 6" stroke="#b3b3b3" strokeWidth="1.200" /></Svg>
            <Chev color="#b3b3b3" />
          </QatBtn>
          <QatBtn $w={24}>
            <Svg w={10} h={12}><path d="M1 2h8M2 6l3 3 3-3" stroke="#b3b3b3" /></Svg>
          </QatBtn>
          <DocName>Comparison Macro - LenderMAC 5.28 <Chev color="#a8a8a8" w={10} /></DocName>
        </TitleLeft>
        <SearchBox>
          <SearchIcon size={20} color="#b0b0b0" strokeWidth={1.2} style={{ transform: 'scaleX(-1)' }} />
          Search
        </SearchBox>
        <TitleRight>
          <Svg w={30} h={30}>
            <circle cx="15" cy="15" r="15" fill="#e6e6e6" />
            <path d="M5 30c0-8 3-12 10-12s10 4 10 12z" fill="#22364f" />
            <path d="M13 18l2 5 2-5z" fill="#fff" />
            <ellipse cx="15" cy="11" rx="4" ry="5" fill="#b98a6e" />
            <path d="M11 9c0-4 8-4 8 0z" fill="#33251c" />
          </Svg>
          <WinBtn $first><Svg w={14} h={14}><path d="M2 7h10" stroke="#b5b5b5" /></Svg></WinBtn>
          <WinBtn><Svg w={14} h={14}><path d="M2 4h8v9H2zM4 4V1h8v9h-2" stroke="#b5b5b5" /></Svg></WinBtn>
          <WinBtn><Svg w={14} h={14}><path d="M1 1l12 12M13 1L1 13" stroke="#8a8a8a" /></Svg></WinBtn>
        </TitleRight>
      </TitleBar>

      <TabsRow>
        <RibbonTab $wide>File</RibbonTab>
        <RibbonTab $active>Home</RibbonTab>
        {tabs.map((t) => <RibbonTab key={t}>{t}</RibbonTab>)}
        <TabActions>
          <CommentsBtn>
            <Svg w={16} h={16}><path d="M2 2h12v9H6l-3 3v-3H2z" stroke="#333" /></Svg>
            Comments
          </CommentsBtn>
          <ShareBtn>
            <Svg w={16} h={16}><path d="M3 5v9h9V9M7 10c0-4 2-6 6-6M10 1l3 3-3 3" stroke="#fff" /></Svg>
            Share <Chev color="#fff" />
          </ShareBtn>
        </TabActions>
      </TabsRow>

      <Ribbon>
        <Clipboard />
        <FontGroup />
        <Alignment />
        <NumberGroup />
        <Styles />
        <Cells />
        <Editing />
        <AddIns />
        <Adobe />
        <Claude />
        <Collapse><Chev w={11} /></Collapse>
      </Ribbon>

      <FormulaBar>
        <NameBox>A1<Chev w={11} /></NameBox>
        <Kebab>⋮</Kebab>
        <FxBox>
          <Svg w={18} h={18}><path d="M3 3l12 12M15 3L3 15" stroke="#b0b0b0" /></Svg>
          <Svg w={20} h={18}><path d="M2 10l5 5L18 3" stroke="#b0b0b0" /></Svg>
          <Glyph $serif $italic $bold $size={19}>fx</Glyph>
          <Chev color="#888" w={9} />
        </FxBox>
        <FormulaInput />
        <FxExpand><Chev w={11} /></FxExpand>
      </FormulaBar>

      <SheetArea>
        <Sheet $rows={template}>
          <Merged>
            <Para $after={51}>1. Make sure formatting match on both sheets to avoid errors from different rounding.</Para>
            <Para $after={39}>2. Rename the sheet you want to see the highlighted changes: "NewTape." Rename the other sheet "OldTape." The new loans that did not exist in OldTape will be light blue on NewTape, vice versa. Updated data from existing loans will be highlighted yellow on NewTape.</Para>
            <Para $after={42}>3. Click the button on the right, but read the rest of these instructions before clicking.</Para>
            <Para $after={22}>4. Select the columns you want to compare and remember to clear search bar before selecting OK.</Para>
            <Para $after={0}>5. In master summary, use filter to select which specific columns to view.</Para>
          </Merged>
          <Corner />
          {cols.map((c, i) => (
            <ColHead key={c} $on={i === 0}>{i < 23 ? c : ''}</ColHead>
          ))}
          {rows.flatMap((_, r) => [
            <RowHead key={`h${r}`} $on={r === 0}>{r + 1}</RowHead>,
            ...cols
              .map((c, i) => ({ c, i }))
              .filter(({ i }) => r < 6 || i === 0 || i > 6)
              .map(({ c, i }) => <Cell key={`${c}${r}`} $active={r === 0 && i === 0} />),
          ])}
        </Sheet>
        <VBar>
          <ArrowUp />
          <VThumb />
          <VDown><ArrowDown /></VDown>
        </VBar>
      </SheetArea>

      <SheetTabs>
        <NavArrows>
          <Svg w={10} h={16}><path d="M8 2L2 8l6 6" stroke="#777" /></Svg>
          <Svg w={10} h={16}><path d="M2 2l6 6-6 6" stroke="#777" /></Svg>
        </NavArrows>
        <SheetTab $w={44}>BI</SheetTab>
        <SheetTab $w={63}>TPR</SheetTab>
        <SheetTab $w={165}>Master Summary</SheetTab>
        <ActiveTab>Macro Button + Instructions</ActiveTab>
        <AddSheet>+</AddSheet>
        <SheetKebab />
        <HTrack>
          <HArrow />
          <HThumb />
          <HArrow $right />
        </HTrack>
      </SheetTabs>

      <StatusBar>
        Select destination and press ENTER or choose Paste
        <StatusRight>
          <ViewBtn $on>
            <Svg w={18} h={18}><path d="M2 2h14v14H2zM2 6.700h14M2 11.300h14M6.700 2v14M11.300 2v14" stroke="#555" /></Svg>
          </ViewBtn>
          <ViewBtn>
            <Svg w={18} h={18}><path d="M2 1h14v16H2zM5 4h8v10H5zM7 7h4M7 10h4" stroke="#555" /></Svg>
          </ViewBtn>
          <ViewBtn>
            <Svg w={18} h={18}><path d="M2 1h14v16H2zM2 11h7V1" stroke="#555" /></Svg>
          </ViewBtn>
          <Zoom>
            −<ZoomTrack />+
          </Zoom>
          <ZoomPct>100%</ZoomPct>
        </StatusRight>
      </StatusBar>

      <Taskbar>
        <Svg w={30} h={30}>
          <rect x="0" y="0" width="14" height="14" fill="#2bb1ea" />
          <rect x="16" y="0" width="14" height="14" fill="#4cc9f5" />
          <rect x="0" y="16" width="14" height="14" fill="#1c98e2" />
          <rect x="16" y="16" width="14" height="14" fill="#1f8fe0" />
        </Svg>
        <TaskSearch>
          <SearchIcon size={22} color="#222" strokeWidth={1.8} />
          Search
        </TaskSearch>
        <TaskItem>
          <Svg w={30} h={32}>
            <rect x="2" y="10" width="18" height="20" rx="2" fill="#6b6b6b" />
            <rect x="10" y="2" width="18" height="20" rx="2" fill="#e7e7e7" />
            <rect x="9" y="10" width="11" height="12" fill="#b4b4b4" />
          </Svg>
        </TaskItem>
        <TaskItem><CopilotIcon size={34} /></TaskItem>
        <TaskItem $dot><Chrome badge="#b33a3a" /></TaskItem>
        <TaskItem><Chrome badge="#5c2b2b" /></TaskItem>
        <TaskItem><Chrome badge="#5f6b73" mark="R" /></TaskItem>
        <TaskItem><Chrome badge="#e8511f" mark="R" /></TaskItem>
        <TaskItem><Chrome badge="#3f5fb0" mark="▲" /></TaskItem>
        <TaskItem><Chrome badge="#d05cb0" mark="◎" /></TaskItem>
        <TaskItem $dot>
          <Svg w={32} h={30}>
            <path d="M2 4c0-1 1-2 2-2h9l3 4H2z" fill="#d99a1c" />
            <rect x="2" y="6" width="28" height="22" rx="2" fill="#f9d23c" />
            <rect x="10" y="18" width="12" height="4" rx="1" fill="#1f86d6" />
          </Svg>
        </TaskItem>
        <TaskItem>
          <Svg w={30} h={38}>
            <circle cx="15" cy="19" r="15" fill="#7f1418" />
            <circle cx="15" cy="14" r="4.500" stroke="#fff" strokeWidth="2.200" />
            <circle cx="15" cy="25" r="5" stroke="#fff" strokeWidth="2.200" />
            <path d="M12 5l6 3-3 3" stroke="#fff" strokeWidth="2" />
          </Svg>
        </TaskItem>
        <TaskItem $dot>
          <Svg w={36} h={40}>
            <circle cx="14" cy="11" r="4" fill="#7b83eb" />
            <rect x="3" y="17" width="14" height="14" rx="2" fill="#4b53bc" />
            <text x="10" y="28" fontSize="10" fontWeight="700" fill="#fff" textAnchor="middle" fontFamily="Liberation Sans">T</text>
            <circle cx="23" cy="26" r="8" fill="#bcd8cf" />
            <text x="23" y="29" fontSize="7.500" fill="#345" textAnchor="middle" fontFamily="Liberation Sans">CK</text>
            <circle cx="27" cy="8" r="8" fill="#c4314b" />
            <text x="27" y="12" fontSize="11" fill="#fff" textAnchor="middle" fontFamily="Liberation Sans">6</text>
          </Svg>
        </TaskItem>
        <TaskItem $active><ExcelLogo size={30} /></TaskItem>
        <TaskItem><Tile from="#ff8f6b" to="#ed6c47" letter="P" chip="#c43e1c" /></TaskItem>
        <TaskItem><Tile from="#ca64ea" to="#e1a0f5" letter="N" chip="#7719aa" /></TaskItem>
        <TaskItem><Tile from="#2b7cd3" to="#41a5ee" letter="W" chip="#185abd" /></TaskItem>
        <TaskItem $dot>
          <Svg w={36} h={40}>
            <rect x="10" y="14" width="22" height="22" rx="2" fill="#1490df" />
            <path d="M10 24l11 7 11-7v12H10z" fill="#28a8ea" />
            <rect x="3" y="16" width="15" height="15" rx="2" fill="#0a6bbd" />
            <text x="10.500" y="27.500" fontSize="11" fontWeight="700" fill="#fff" textAnchor="middle" fontFamily="Liberation Sans">O</text>
            <circle cx="27" cy="10" r="9" fill="#0f6cbd" />
            <path d="M22 7h10v7H22zM22 7l5 4 5-4" stroke="#fff" strokeWidth="1" />
          </Svg>
        </TaskItem>
        <TaskItem $dot>
          <Svg w={26} h={30}>
            <rect x="1" y="1" width="24" height="28" rx="5" fill="#2e0f7a" />
            <text x="13" y="21" fontSize="17" fontWeight="700" fill="#e7def8" textAnchor="middle" fontFamily="Liberation Sans">G</text>
          </Svg>
        </TaskItem>
        <TaskItem $dot>
          <Svg w={32} h={32}>
            <path d="M13 1h6l1 5 4 2 4-3 4 5-3 4v4l3 4-4 5-4-3-4 2-1 5h-6l-1-5-4-2-4 3-4-5 3-4v-4L0 10l4-5 4 3 4-2z" fill="#000" />
            <circle cx="16" cy="16" r="6" fill="none" stroke="#4a3a26" strokeWidth="3" />
          </Svg>
        </TaskItem>
        <Tray>
          <Weather>
            <Svg w={30} h={34}>
              <circle cx="15" cy="17" r="15" fill="#ef9a1f" />
              <ellipse cx="19" cy="24" rx="9" ry="5" fill="#cfe3f5" />
            </Svg>
            <TempBadge>64°</TempBadge>
          </Weather>
          <TrayItem $w={40}>
            <Svg w={16} h={12}><path d="M2 9l6-6 6 6" stroke="#fff" strokeWidth="1.800" /></Svg>
          </TrayItem>
          <TrayItem $w={40}>
            <Svg w={24} h={26}>
              <circle cx="10" cy="11" r="7" fill="#bbb" />
              <circle cx="16" cy="18" r="7" fill="#0f6cbd" />
              <text x="16" y="22" fontSize="10" fill="#fff" textAnchor="middle" fontFamily="Liberation Sans">i</text>
            </Svg>
          </TrayItem>
          <TrayItem $w={40}>
            <Svg w={24} h={20}><path d="M2 16c-1-4 2-6 5-6 1-5 8-7 11-1 4 0 5 6 2 8H5z" fill="#1f9bf0" /></Svg>
          </TrayItem>
          <MicBox>
            <Svg w={20} h={30}>
              <rect x="6" y="2" width="8" height="16" rx="4" fill="#111" />
              <path d="M3 13c0 9 14 9 14 0M10 21v7" stroke="#111" strokeWidth="1.500" />
            </Svg>
          </MicBox>
          <TrayItem $w={40}>
            <Svg w={22} h={22}>
              <path d="M2 8c5-5 13-5 18 0M5 12c3-3 9-3 12 0M8 15c2-1 4-1 6 0" stroke="#fff" strokeWidth="1.400" />
              <circle cx="11" cy="18" r="1.500" fill="#fff" />
            </Svg>
          </TrayItem>
          <TrayItem $w={20}>
            <Svg w={22} h={22}>
              <path d="M3 8h3l5-4v14l-5-4H3zM14 8c2 2 2 4 0 6M17 5c3 4 3 8 0 12" stroke="#fff" strokeWidth="1.200" />
            </Svg>
          </TrayItem>
          <TrayItem $w={40}>
            <Svg w={22} h={22}>
              <rect x="5" y="7" width="15" height="11" rx="1.500" fill="#fff" />
              <path d="M3 9V3l4 3z" fill="#fff" />
            </Svg>
          </TrayItem>
          <Clock>2:39 PM<br />5/28/2026</Clock>
          <TrayItem $w={34}>
            <Svg w={22} h={24}>
              <path d="M4 17c2-2 1-8 3-10 2-3 6-3 8 0 2 2 1 8 3 10zM9 20h4" stroke="#fff" strokeWidth="1.200" />
            </Svg>
          </TrayItem>
        </Tray>
      </Taskbar>

      <CopilotFloat><CopilotIcon /></CopilotFloat>

      <Dialog>
        <DialogTitle>
          Select columns to compare, than click OK.
          <Svg w={14} h={14}><path d="M1 1l12 12M13 1L1 13" stroke="#222" strokeWidth="1.100" /></Svg>
        </DialogTitle>
        <DialogMid>
          <DialogBody>
            <Lists>
              <ListBox $w={332} $h={319} $sel>
                <ListItems $pl={9}>
                  {leftItems.map((t) => <ListItem key={t} $pitch={18.6} $size={15}>{t}</ListItem>)}
                </ListItems>
                <ListScroll top={175} h={79} />
              </ListBox>
              <ListBox $w={330} $h={307}>
                <ListItems $pl={8}>
                  <ListItem $indent $pitch={18.93} $size={14}>Primary Score</ListItem>
                  {rightItems.map((t) => <ListItem key={t} $pitch={18.93} $size={14}>{t}</ListItem>)}
                </ListItems>
                <ListScroll top={0} h={72} />
              </ListBox>
            </Lists>
            <Buttons>
              <OkBtn $w={111}>OK</OkBtn>
              <Btn $w={126}>Select All</Btn>
              <Btn $w={126}>Unselect All</Btn>
              <Btn $w={120}>Cancel</Btn>
            </Buttons>
          </DialogBody>
          <ClassicBar $w={14}>
            <ClassicBtn><Tri $dir="up" /></ClassicBtn>
            <Spacer />
            <ClassicBtn><Tri $dir="down" /></ClassicBtn>
          </ClassicBar>
        </DialogMid>
        <HBarRow>
          <HBarBtn><Tri $dir="left" /></HBarBtn>
          <HBarTrack />
          <HBarBtn><Tri $dir="right" /></HBarBtn>
          <BarCorner />
        </HBarRow>
      </Dialog>
    </Screen>
  )
}
